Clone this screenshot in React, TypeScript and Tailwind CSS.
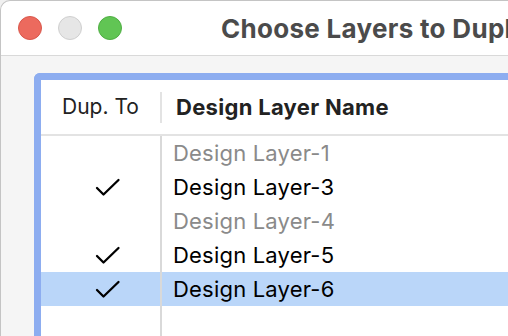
import { Fragment } from 'react';

const rows = [
  { name: 'Design Layer-1', checked: false, dim: true },
  { name: 'Design Layer-3', checked: true, dim: false },
  { name: 'Design Layer-4', checked: false, dim: true },
  { name: 'Design Layer-5', checked: true, dim: false },
  { name: 'Design Layer-6', checked: true, dim: false, selected: true },
];

const Check = () => (
  <svg width="26" height="19" viewBox="0 0 26 19" fill="none">
    <path d="M2 10 L8.5 16.5 L23.5 2" stroke="#000" strokeWidth="2.3" strokeLinecap="round" strokeLinejoin="round" />
  </svg>
);

export default function App() {
  return (
    <div
      className="flex h-[336px] w-[508px] overflow-hidden bg-[#f0f0f0]"
      style={{ fontFamily: 'Inter, "Noto Sans", sans-serif' }}
    >
      <div className="w-[2px] bg-[#b9b9b9]" />
      <div className="flex flex-1 flex-col rounded-tl-[10px] border-l border-t border-[#c4c4c4] bg-white">
        <div className="flex h-[55px] shrink-0 items-center border-b border-[#d9d9d9] pl-[17px]">
          <div className="flex gap-[16px]">
            <span className="h-[24px] w-[24px] rounded-full border border-[#d9574b] bg-[#ec6a5e]" />
            <span className="h-[24px] w-[24px] rounded-full border border-[#cfcfcf] bg-[#e6e6e6]" />
            <span className="h-[24px] w-[24px] rounded-full border border-[#4fae43] bg-[#61c554]" />
          </div>
          <h1 className="ml-[99px] whitespace-nowrap text-[26px] font-bold tracking-[0.3px] text-[#4b4b4b]">
            Choose Layers to Duplicate
          </h1>
        </div>
        <div className="flex flex-1 bg-[#f5f5f5] pl-[33px] pt-[17px]">
          <div className="flex flex-1 flex-col rounded-tl-[6px] border-l-[7px] border-t-[7px] border-[#8dadf0] bg-white">
            <div className="flex h-[56px] shrink-0 items-center border-b-2 border-[#e3e3e3]">
              <div className="w-[119px] text-center text-[21px] text-[#222]">Dup. To</div>
              <div className="h-[31px] w-[2px] bg-[#e3e3e3]" />
              <div className="pl-[14px] text-[22px] font-bold tracking-[0.3px] text-[#222]">Design Layer Name</div>
            </div>
            <div className="relative flex-1">
              <div className="absolute bottom-0 left-[119px] top-0 w-[2px] bg-[#d9d9d9]" />
              {rows.map((r) => (
                <Fragment key={r.name}>
                  <div className={`flex h-[34px] items-center ${r.selected ? 'bg-[#bad6f9]' : ''}`}>
                    <div className="flex w-[119px] justify-center pl-[14px]">{r.checked ? <Check /> : null}</div>
                    <div
                      className={`pl-[13px] text-[22px] tracking-[0.2px] ${r.dim ? 'text-[#8a8a8a]' : 'text-black'}`}
                    >
                      {r.name}
                    </div>
                  </div>
                </Fragment>
              ))}
            </div>
          </div>
        </div>
      </div>
    </div>
  );
}
